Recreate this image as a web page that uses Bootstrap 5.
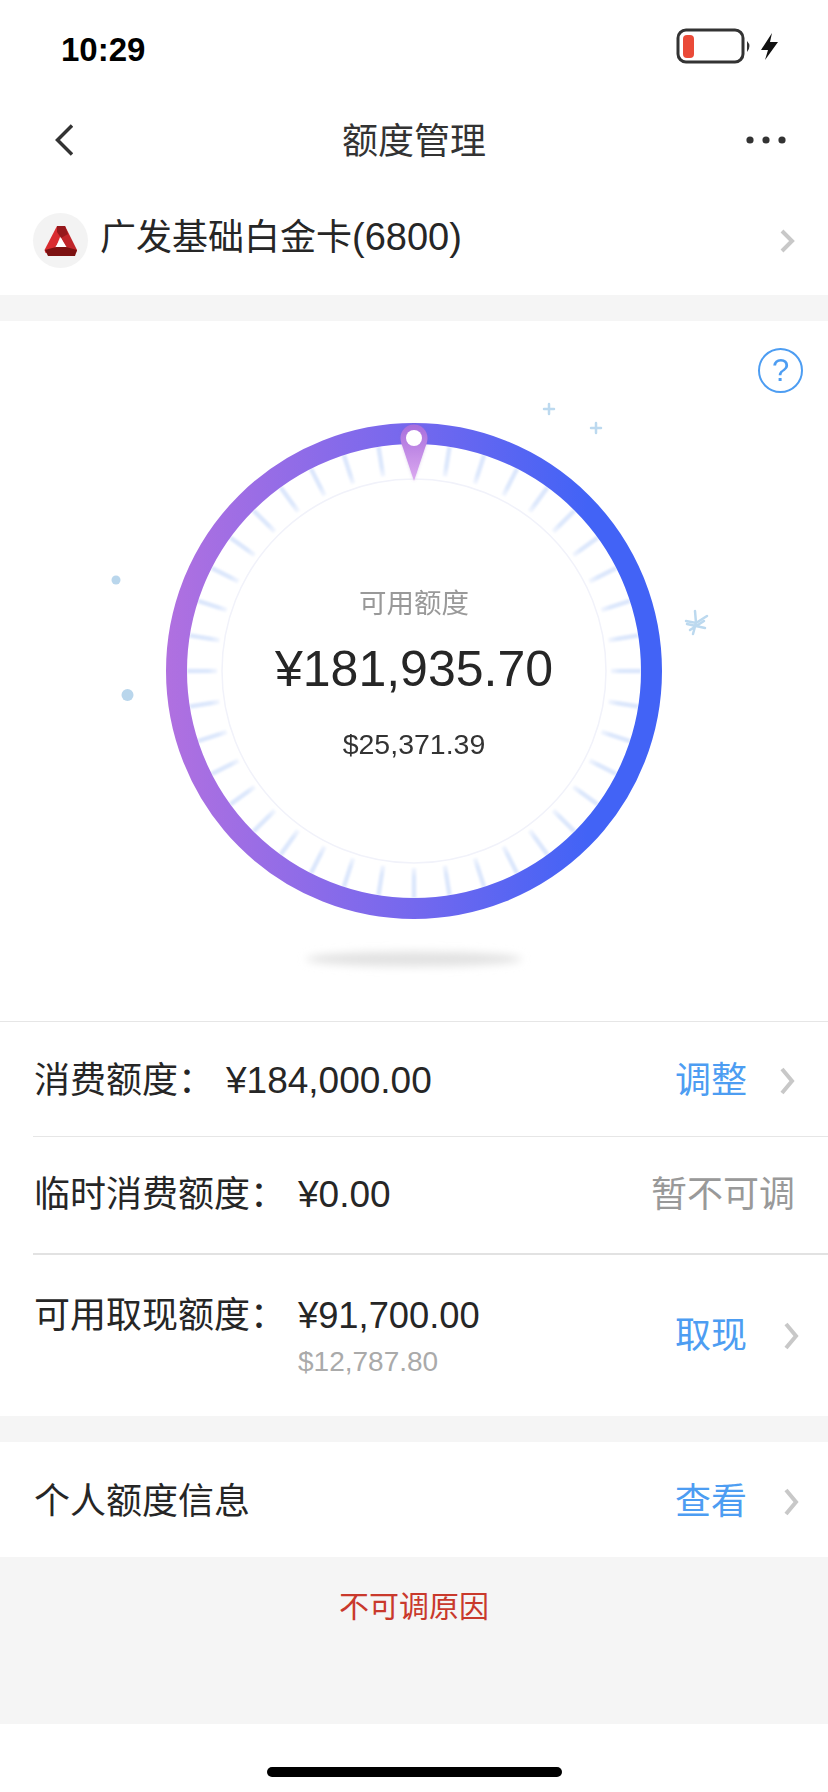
<!DOCTYPE html>
<html lang="zh-CN">
<head>
<meta charset="utf-8">
<title>额度管理</title>
<link href="https://cdn.jsdelivr.net/npm/bootstrap@5.3.0/dist/css/bootstrap.min.css" rel="stylesheet">
<style>
body{width:828px;height:1792px;margin:0;overflow:hidden;background:#fff;font-family:"Liberation Sans","Noto Sans CJK SC",sans-serif;color:#262626;font-size:36px;line-height:44px}
.status-bar{height:90px;padding:12px 48px 0 61px}
.clock{font-size:33px;line-height:40px;font-weight:700;color:#000;margin-top:-2px}
.batt{width:104px;height:40px;margin-top:-8px}
.nav-top{height:100px;padding:0 42px 0 55px;position:relative}
.nav-title{position:absolute;left:0;right:0;top:30px;text-align:center;color:#333}
.card-row{height:105px;padding:0 33px 4px;}
.bank-logo{width:55px;height:55px;background:#f3f3f3;margin-right:12px;flex:none}
.card-name{margin-top:-6px}
.card-num{font-size:38px}
.gap-band{height:26px;background:#f5f5f5}
.gauge{height:700px;position:relative}
.gauge svg{display:block}
.gauge-text{position:absolute;inset:0;padding-top:263px;pointer-events:none}
.g-label{font-size:27.500px;line-height:40px;color:#999}
.g-amount{font-size:50px;line-height:70px;margin-top:10px;color:#262626}
.g-usd{font-size:28.500px;line-height:40px;margin-top:20px;color:#333}
.help-btn{position:absolute;left:758px;top:27px;width:45px;height:45px;border:2px solid #4d9df2;border-radius:50%;color:#4d9df2;font-size:31px;line-height:41px;text-align:center}
.quota-list{border-top:1px solid #e6e6e6}
.q-row{padding:0 33px 0 34px}
.q-r1{height:114px;padding-top:4px}
.q-r2{height:116px}
.q-r3{height:161px}
.q-r4{height:115px;padding-top:4px}
.q-rule{height:1px;background:#e6e6e6;margin-left:33px}
.q-rule-thick{height:2px;background:#e2e2e2;margin-left:33px}
.q-name{width:192px;flex:none}
.q-name-wide{width:264px;flex:none}
.q-val{font-size:37px}
.q-val-tight{font-size:36.300px}
.q-sub{font-size:28px;line-height:32px;color:#aaa;margin-top:8px}
.q-blue{color:#4d9df2}
.q-grey{color:#999}
.q-chev{width:16px;height:28px;margin-left:32px;flex:none}
.q-chev-far{margin-left:36px;margin-right:-4px}
.reason{height:167px;background:#f5f5f5;padding-top:30px;text-align:center;font-size:30px;line-height:40px;color:#c9392c}
.home-zone{height:69px;padding-top:43px}
.home-bar{width:295px;height:10px;background:#000;border-radius:5px}
</style>
</head>
<body>
<div class="status-bar d-flex justify-content-between align-items-center">
  <div class="clock">10:29</div>
  <svg class="batt" viewBox="0 0 104 40" aria-hidden="true">
    <rect x="2" y="3" width="65" height="32" rx="8" fill="none" stroke="#333" stroke-width="3"/>
    <rect x="7" y="8" width="11" height="23" rx="4" fill="#ea4a38"/>
    <path d="M71 14q5 5 0 11z" fill="#333"/>
    <path d="M96 6 85 23h7l-3 10 13-18h-8z" fill="#111"/>
  </svg>
</div>
<div class="nav-top d-flex justify-content-between align-items-center">
  <svg width="18" height="32" viewBox="0 0 18 32" aria-hidden="true"><path d="M17 1.500 2.500 16 17 30.500" fill="none" stroke="#333" stroke-width="3.500"/></svg>
  <div class="nav-title">额度管理</div>
  <svg width="40" height="10" viewBox="0 0 40 10" aria-hidden="true"><circle cx="4" cy="5" r="3.600" fill="#333"/><circle cx="20" cy="5" r="3.600" fill="#333"/><circle cx="36" cy="5" r="3.600" fill="#333"/></svg>
</div>
<div class="card-row d-flex align-items-center">
  <div class="bank-logo rounded-circle d-flex align-items-center justify-content-center">
    <svg width="36" height="32" viewBox="43 222 34 32" aria-hidden="true">
      <path d="M56 223h4l1 6-5.500 14-5 6-6 1-1-3z" fill="#d92c30"/>
      <path d="M60 223h4l12 24-1 3-6-1-5-6-4-8z" fill="#c0252a"/>
      <path d="M56 223h8l3 8-7 4-4-6z" fill="#96181c"/>
      <path d="M55 244h10l11 3-2 6H47l-3-6z" fill="#7c1111"/>
      <path d="M60 235l5.500 9h-11z" fill="#fff"/>
    </svg>
  </div>
  <div class="card-name flex-grow-1">广发基础白金卡<span class="card-num">(6800)</span></div>
  <svg width="16" height="24" viewBox="0 0 16 24" aria-hidden="true"><path d="M3 2l10 10L3 22" fill="none" stroke="#c8c8c8" stroke-width="4"/></svg>
</div>
<div class="gap-band"></div>
<section class="gauge">
  <svg id="dial" width="828" height="700" viewBox="0 321 828 700" aria-hidden="true">
    <defs>
      <linearGradient id="ringG" gradientUnits="userSpaceOnUse" x1="166" y1="671" x2="662" y2="671">
        <stop offset="0" stop-color="#b070e0"/>
        <stop offset=".5" stop-color="#7468ee"/>
        <stop offset=".85" stop-color="#4263f6"/>
      </linearGradient>
      <linearGradient id="tickG" gradientUnits="userSpaceOnUse" x1="0" y1="-227" x2="0" y2="-197">
        <stop offset="0" stop-color="#dbe6fc"/>
        <stop offset=".7" stop-color="#dde8fc"/>
        <stop offset="1" stop-color="#f2f6fe"/>
      </linearGradient>
      <linearGradient id="pinG" x1="0" y1="0" x2="0" y2="1">
        <stop offset="0" stop-color="#a86edc"/>
        <stop offset="1" stop-color="#dcaaf0"/>
      </linearGradient>
      <filter id="soft" x="-30%" y="-30%" width="160%" height="160%"><feGaussianBlur stdDeviation=".8"/></filter>
      <filter id="softer" x="-20%" y="-100%" width="140%" height="300%"><feGaussianBlur stdDeviation="4"/></filter>
      <filter id="pinS" x="-50%" y="-20%" width="200%" height="140%"><feDropShadow dx="0" dy="0" stdDeviation="1.500" flood-color="#8a60c0" flood-opacity=".3"/></filter>
    </defs>
    <g id="ticks" transform="translate(414 671)" filter="url(#soft)"></g>
    <circle cx="414" cy="671" r="192" fill="none" stroke="#f1f2fa" stroke-width="1.500"/>
    <circle cx="414" cy="671" r="237.500" fill="none" stroke="url(#ringG)" stroke-width="21"/>
    <path d="M414 424.500c7.500 0 13.500 6 13.500 13.500 0 4-1.500 7-2.500 10l-11 33-11-33c-1-3-2.500-6-2.500-10 0-7.500 6-13.500 13.500-13.500z" fill="url(#pinG)" filter="url(#pinS)"/>
    <circle cx="414" cy="438" r="8" fill="#fff"/>
    <ellipse cx="414" cy="959" rx="108" ry="7.500" fill="#e2e2e2" filter="url(#softer)"/>
    <g fill="none" stroke="#bcd9ef" stroke-width="2.500" stroke-linecap="round">
      <path d="M549 404v10M544 409h10"/>
      <path d="M596 423v10M591 428h10"/>
      <path d="M695 611l1 12-3 11M707 616l-11 7-10-2M687 624l18 4M690 630l14-9"/>
    </g>
    <circle cx="116" cy="580" r="4.500" fill="#b9d6ec"/>
    <circle cx="127.500" cy="695" r="6" fill="#b9d6ec"/>
  </svg>
  <div class="gauge-text d-flex flex-column align-items-center">
    <div class="g-label">可用额度</div>
    <div class="g-amount">¥181,935.70</div>
    <div class="g-usd">$25,371.39</div>
  </div>
  <div class="help-btn">?</div>
</section>
<section class="quota-list">
  <div class="q-row q-r1 d-flex align-items-center">
    <div class="q-name">消费额度：</div>
    <div class="q-val flex-grow-1">¥184,000.00</div>
    <div class="q-blue">调整</div>
    <svg class="q-chev" viewBox="0 0 16 28" aria-hidden="true"><path d="M3 2l10 12L3 26" fill="none" stroke="#c8c8c8" stroke-width="4"/></svg>
  </div>
  <div class="q-rule"></div>
  <div class="q-row q-r2 d-flex align-items-center">
    <div class="q-name-wide">临时消费额度：</div>
    <div class="q-val flex-grow-1">¥0.00</div>
    <div class="q-grey">暂不可调</div>
  </div>
  <div class="q-rule-thick"></div>
  <div class="q-row q-r3 d-flex align-items-center">
    <div class="q-name-wide">可用取现额度：<div class="q-sub">&nbsp;</div></div>
    <div class="q-val-tight flex-grow-1">¥91,700.00<div class="q-sub">$12,787.80</div></div>
    <div class="q-blue">取现</div>
    <svg class="q-chev q-chev-far" viewBox="0 0 16 28" aria-hidden="true"><path d="M3 2l10 12L3 26" fill="none" stroke="#c8c8c8" stroke-width="4"/></svg>
  </div>
</section>
<div class="gap-band"></div>
<div class="q-row q-r4 d-flex align-items-center">
  <div class="flex-grow-1">个人额度信息</div>
  <div class="q-blue">查看</div>
  <svg class="q-chev q-chev-far" viewBox="0 0 16 28" aria-hidden="true"><path d="M3 2l10 12L3 26" fill="none" stroke="#c8c8c8" stroke-width="4"/></svg>
</div>
<div class="reason">不可调原因</div>
<div class="home-zone d-flex justify-content-center"><div class="home-bar"></div></div>
<script src="https://cdn.jsdelivr.net/npm/bootstrap@5.3.0/dist/js/bootstrap.bundle.min.js"></script>
<script>
var g=document.getElementById('ticks'),s='';
for(var i=0;i<40;i++){s+='<line x1="0" y1="-227" x2="0" y2="-197" stroke="url(#tickG)" stroke-width="4.500" transform="rotate('+(i*9)+')"/>';}
g.innerHTML=s;
</script>
</body>
</html>
